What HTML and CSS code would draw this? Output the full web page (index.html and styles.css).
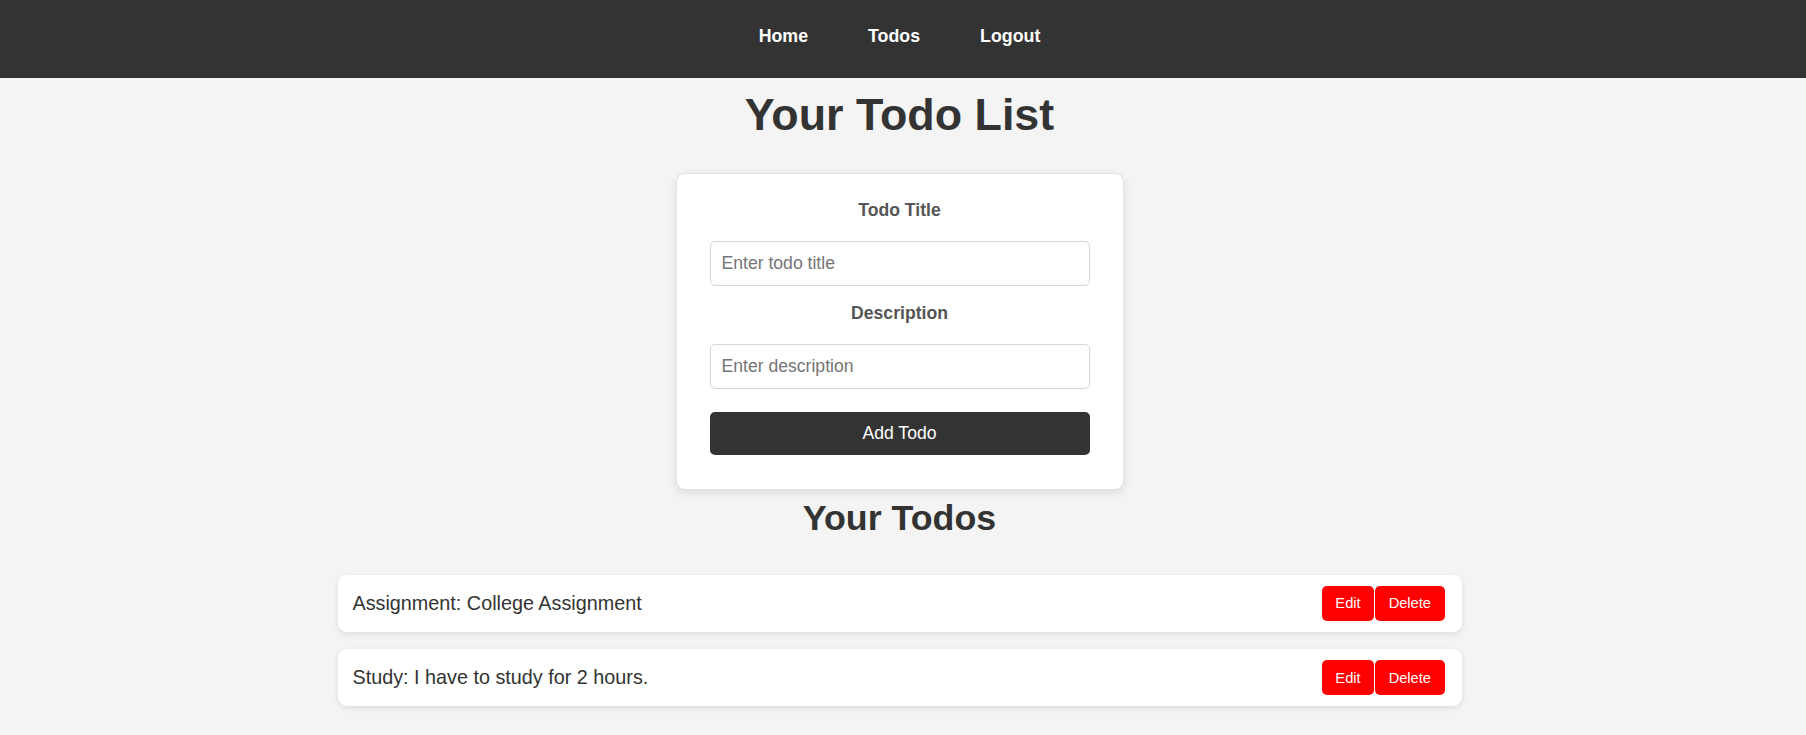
FILE: index.html
```html
<!DOCTYPE html>
<html lang="en">
<head>
<meta charset="utf-8">
<title>Todo List</title>
<link rel="stylesheet" href="styles.css">
</head>
<body>
  <header class="topbar">
    <nav class="nav">
      <a class="nav-link" href="#">Home</a>
      <a class="nav-link" href="#">Todos</a>
      <a class="nav-link" href="#">Logout</a>
    </nav>
  </header>
  <main class="page">
    <h1 class="page-title">Your Todo List</h1>
    <form class="todo-form">
      <label class="form-label" for="title">Todo Title</label>
      <input class="form-input first" id="title" type="text" placeholder="Enter todo title">
      <label class="form-label" for="desc">Description</label>
      <input class="form-input second" id="desc" type="text" placeholder="Enter description">
      <button class="add-btn" type="button">Add Todo</button>
    </form>
    <h2 class="section-title">Your Todos</h2>
    <ul class="todo-list">
      <li class="todo-item">
        <span class="todo-text">Assignment: College Assignment</span>
        <div class="todo-actions">
          <button class="act-btn" type="button">Edit</button>
          <button class="act-btn" type="button">Delete</button>
        </div>
      </li>
      <li class="todo-item">
        <span class="todo-text">Study: I have to study for 2 hours.</span>
        <div class="todo-actions">
          <button class="act-btn" type="button">Edit</button>
          <button class="act-btn" type="button">Delete</button>
        </div>
      </li>
    </ul>
  </main>
</body>
</html>
```

FILE: styles.css
```css
* {
  box-sizing: border-box;
}

html, body {
  margin: 0;
  padding: 0;
}

body {
  background: #f4f4f4;
  font-family: "Liberation Sans", Arial, sans-serif;
  color: #333;
}

.topbar {
  background: #333;
  height: 78px;
}

.nav {
  display: flex;
  justify-content: center;
  gap: 60px;
  padding-top: 26px;
  padding-right: 7px;
}

.nav-link {
  color: #fff;
  text-decoration: none;
  font-weight: bold;
  font-size: 17.8px;
  line-height: 20px;
}

.page {
  display: flex;
  flex-direction: column;
  align-items: center;
  padding-right: 7px;
  padding-bottom: 20px;
}

.page-title {
  margin: 11px 0 34px;
  font-size: 44.8px;
  line-height: 50px;
  font-weight: bold;
  color: #333;
}

.todo-form {
  width: 448px;
  display: flex;
  flex-direction: column;
  background: #fff;
  border: 1px solid #e2e2e2;
  border-radius: 9px;
  padding: 26px 33px 34px;
  box-shadow: 0 3px 10px rgba(0, 0, 0, 0.1);
  margin: 0;
}

.form-label {
  display: block;
  text-align: center;
  font-weight: bold;
  font-size: 17.6px;
  line-height: 20px;
  color: #555;
  margin-bottom: 21px;
}

.form-input {
  width: 100%;
  height: 45px;
  border: 1px solid #d6d6d6;
  border-radius: 5px;
  padding: 0 11px;
  font-family: "Liberation Sans", Arial, sans-serif;
  font-size: 17.6px;
  color: #333;
  background: #fff;
}

.form-input::placeholder {
  color: #757575;
}

.form-input.first {
  margin-bottom: 17px;
}

.form-input.second {
  margin-bottom: 22.5px;
}

.add-btn {
  width: 100%;
  height: 43px;
  border: none;
  border-radius: 5px;
  background: #333;
  color: #fff;
  font-family: "Liberation Sans", Arial, sans-serif;
  font-size: 17.6px;
}

.section-title {
  margin: 8px 0 37px;
  font-size: 35.8px;
  line-height: 40px;
  font-weight: bold;
  color: #333;
}

.todo-list {
  list-style: none;
  margin: 0;
  padding: 0;
  width: 1124px;
  display: flex;
  flex-direction: column;
  gap: 17.5px;
}

.todo-item {
  display: flex;
  align-items: center;
  justify-content: space-between;
  background: #fff;
  border-radius: 9px;
  padding: 11px 17px 11px 15px;
  box-shadow: 0 2px 6px rgba(0, 0, 0, 0.1);
}

.todo-text {
  font-size: 19.8px;
  color: #333;
}

.todo-actions {
  display: flex;
  gap: 1px;
}

.act-btn {
  height: 35px;
  padding: 0 13.5px;
  border: none;
  border-radius: 5px;
  background: #ff0000;
  color: #fff;
  font-family: "Liberation Sans", Arial, sans-serif;
  font-size: 14.67px;
}
```
